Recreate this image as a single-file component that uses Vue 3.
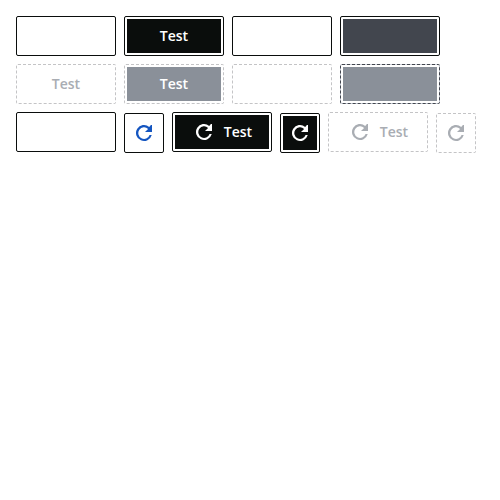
<script setup>
const rows = [
  [
    { kind: 'outline' },
    { kind: 'solid', text: 'Test' },
    { kind: 'outline' },
    { kind: 'slate' }
  ],
  [
    { kind: 'outline', off: true, text: 'Test' },
    { kind: 'solid', off: true, text: 'Test' },
    { kind: 'outline', off: true },
    { kind: 'slate', off: true }
  ],
  [
    { kind: 'outline' },
    { kind: 'outline', icon: true, square: true },
    { kind: 'solid', icon: true, text: 'Test' },
    { kind: 'solid', icon: true, square: true },
    { kind: 'outline', off: true, icon: true, text: 'Test' },
    { kind: 'outline', off: true, icon: true, square: true }
  ]
]
</script>

<template>
  <main class="page">
    <div v-for="(row, r) in rows" :key="r" class="row">
      <button
        v-for="(b, i) in row"
        :key="i"
        type="button"
        class="btn"
        :class="[b.kind, { off: b.off, square: b.square }]"
        :disabled="b.off"
      >
        <svg v-if="b.icon" class="icon" viewBox="0 0 24 24" aria-hidden="true">
          <path d="M20 4v7h-7l3.1-3.1A5.8 5.8 0 1 0 17.6 14h2.15A8 8 0 1 1 17.2 5.9L18.9 4z" />
        </svg>
        <span v-if="b.text">{{ b.text }}</span>
      </button>
    </div>
  </main>
</template>

<style>
body {
  background: #fff;
}
</style>

<style scoped>
.page {
  display: flex;
  flex-direction: column;
  gap: 8px;
  padding: 16px;
}
.row {
  display: flex;
  gap: 8px;
  height: 40px;
}
.btn {
  box-sizing: border-box;
  flex: none;
  display: flex;
  align-items: center;
  justify-content: center;
  gap: 8px;
  width: 100px;
  height: 40px;
  margin: 0;
  padding: 2px;
  border: 1px solid #0a0d0c;
  border-radius: 2px;
  background: #fff content-box;
  color: #1455c0;
  font: 600 14px/20px "Open Sans", sans-serif;
}
.btn.square {
  width: 40px;
  margin-top: 1px;
}
.icon {
  flex: none;
  width: 24px;
  height: 24px;
  fill: currentColor;
}
.solid {
  background-color: #0a0d0c;
  color: #fff;
}
.slate {
  background-color: #42464e;
}
.off {
  border: 1px dashed #c4c4c6;
  color: #a9adb3;
}
.solid.off {
  background-color: #8a9099;
  color: #fff;
}
.slate.off {
  background:
    linear-gradient(#8a9099, #8a9099) content-box,
    linear-gradient(#fff, #fff) padding-box,
    #c9cdd6 border-box;
  border-color: #42464e;
}
</style>
